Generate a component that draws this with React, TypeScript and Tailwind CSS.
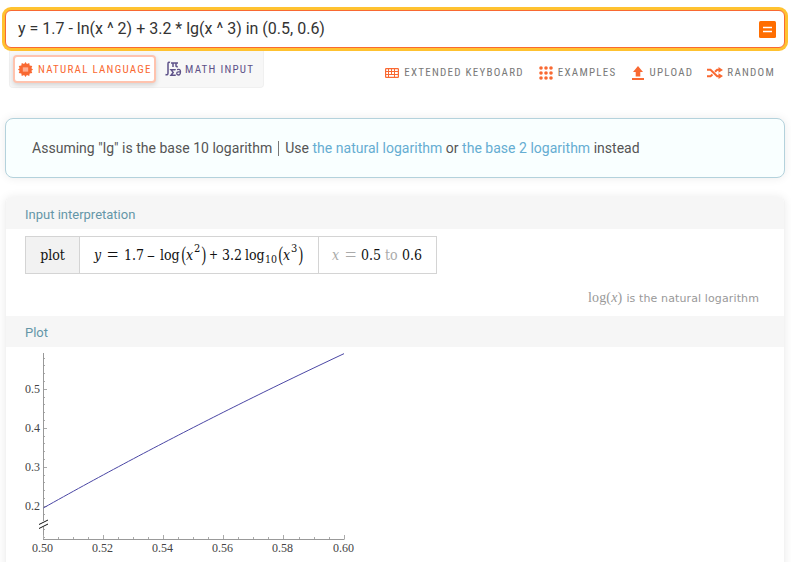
import type { ReactNode } from "react";

const serif = "font-['DejaVu_Serif_Condensed','DejaVu_Serif',serif]";

const px = (x: number) => 43.5 + (x - 0.5) * 3005;
const py = (y: number) => 389.5 - (y - 0.5) * 390;

const curve = Array.from({ length: 61 }, (_, i) => {
  const x = 0.5 + i / 600;
  return `${px(x).toFixed(2)},${py(1.7 - 2 * Math.log(x) + 9.6 * Math.log10(x)).toFixed(2)}`;
}).join(" ");

const xTicks = Array.from({ length: 21 }, (_, i) => i);
const yTicks = Array.from({ length: 24 }, (_, i) => i);

function Chart() {
  return (
    <svg width="360" height="215" viewBox="0 347 360 215" className="block">
      <g stroke="#999" strokeWidth="1">
        <path d="M43.5 353V521M43.5 527V540M43 539.5H344.5" fill="none" />
        {xTicks.map((i) => {
          const x = Math.round(43 + i * 15.03) + 0.5;
          return <path key={i} d={`M${x} ${i % 4 ? 537 : 535}V539`} stroke="#aaa" />;
        })}
        {yTicks.map((i) => {
          const y = Math.floor(358 + i * 7.8) + 0.5;
          if (i === 21) return null;
          return <path key={i} d={`M44 ${y}H${i % 5 === 4 ? 47 : 45}`} stroke="#aaa" />;
        })}
      </g>
      <path d="M39 524.5L48 520M39 528.5L48 524" stroke="#111" strokeWidth="1" />
      <polyline points={curve} fill="none" stroke="#4a46a4" strokeWidth="1" />
      <g className="font-['Liberation_Serif',serif] text-[12px]" fill="#444">
        {[0.5, 0.4, 0.3, 0.2].map((v) => (
          <text key={v} x="40" y={py(v) + 3.5} textAnchor="end">{v.toFixed(1)}</text>
        ))}
        {[0.5, 0.52, 0.54, 0.56, 0.58, 0.6].map((v) => (
          <text key={v} x={v === 0.6 ? 343.5 : 42.5 + (v - 0.5) * 3000} y="552" textAnchor="middle">{v.toFixed(2)}</text>
        ))}
      </g>
    </svg>
  );
}

const toolText = "whitespace-nowrap font-['Roboto_Condensed',Roboto,sans-serif] text-[11px] leading-4 tracking-[1.25px] [font-stretch:75%]";

function Tool({ children, label, className }: { children: ReactNode; label: string; className: string }) {
  return (
    <div className={`flex items-center ${className}`}>
      {children}
      <span className={toolText}>{label}</span>
    </div>
  );
}

function PodHeader({ children, className = "" }: { children: ReactNode; className?: string }) {
  return <h2 className={`bg-[#f6f6f6] pl-5 text-[13px] text-[#6596a8] ${className}`}>{children}</h2>;
}

function Paren({ children }: { children: string }) {
  return <span className="inline-block w-[5px] origin-center scale-x-[0.85] scale-y-[1.25] text-center font-['Liberation_Serif',serif] text-[16px]">{children}</span>;
}

function Equals({ className }: { className: string }) {
  return <span className={`origin-left scale-x-[1.12] font-['Liberation_Serif',serif] text-[18px] leading-none ${className}`}>=</span>;
}

export default function App() {
  return (
    <div className="flex h-[562px] w-[791px] flex-col overflow-hidden bg-white pl-[5px] pr-[6px] pt-[10px] font-[Roboto,sans-serif]">
      <div className="relative flex h-[38px] shrink-0 items-center justify-between rounded-[6px] border border-[#f96932] bg-white pl-3 pr-[8px] shadow-[0_0_0_3px_#ffc230]">
        <span className="text-[16px] text-[#333]">y = 1.7 - ln(x ^ 2) + 3.2 * lg(x ^ 3) in (0.5, 0.6)</span>
        <svg width="17" height="17" viewBox="0 0 17 17">
          <rect width="17" height="17" rx="1.5" fill="#ff6d00" />
          <path d="M4 6.5H13M4 10.5H13" stroke="#fff" strokeWidth="1.5" />
        </svg>
      </div>

      <div className="flex h-[70px] shrink-0 justify-between">
        <div className="ml-1 flex h-[40px] w-[255px] items-center rounded-b-[4px] border border-t-0 border-[#f0f0f0] bg-[#f7f7f7] pl-[3px] pt-[3px]">
          <div className="flex h-[28px] w-[143px] shrink-0 items-center rounded-[4px] border-2 border-[#ffc3ae] bg-white pl-[3px] text-[#f96932] shadow-[0_2px_5px_rgba(0,0,0,0.15)]">
            <svg className="shrink-0" width="15" height="15" viewBox="-7 -7 14 14">
              <path d="M0 -7L1.3 -5.1L3.5 -6.1L3.9 -3.8L6.3 -3.3L5.5 -1.2L7 0L5.5 1.2L6.3 3.3L3.9 3.8L3.5 6.1L1.3 5.1L0 7L-1.3 5.1L-3.5 6.1L-3.9 3.8L-6.3 3.3L-5.5 1.2L-7 0L-5.5 -1.2L-6.3 -3.3L-3.9 -3.8L-3.5 -6.1L-1.3 -5.1Z" fill="currentColor" />
              <rect x="-2.5" y="-2" width="5" height="4" fill="#ffad90" />
            </svg>
            <span className={`ml-[5px] pt-[2px] ${toolText}`}>NATURAL LANGUAGE</span>
          </div>
          <div className="ml-[9px] flex items-center text-[#5e5289]">
            <svg className="shrink-0" width="17" height="16" viewBox="0 0 17 16" fill="none" stroke="currentColor" strokeWidth="1.5">
              <path d="M5 1.5Q3 .5 3 3V12Q3 14.5 .5 13.5" />
              <path d="M6 2H13M8 2V6M11 2V5Q11 6 12.8 5.5" />
              <path d="M10 9.3V8.7H6L8.2 11.4L6 14.3H10V13.5" />
              <path d="M12 8.7Q15.5 7.5 15.5 10.5Q15.5 14 13.4 14Q11.7 14 11.7 12.3Q11.7 10.9 13.4 10.9H15.4" strokeWidth="1.3" />
            </svg>
            <span className={`ml-[3px] pt-[2px] ${toolText}`}>MATH INPUT</span>
          </div>
        </div>

        <div className="mt-[17px] flex h-4 items-center pr-[10px] text-[#797979]">
          <Tool label="EXTENDED KEYBOARD" className="gap-[5px]">
            <svg width="14" height="10" viewBox="0 0 14 10" fill="none" stroke="#f96932">
              <rect x=".6" y=".6" width="12.8" height="8.8" rx=".6" strokeWidth="1.2" />
              <path d="M0 3.5H14M0 6.5H14M3.5 0V10M6.5 0V6.5M9.5 0V10" />
            </svg>
          </Tool>
          <Tool label="EXAMPLES" className="ml-[15px] gap-[5px]">
            <svg width="14" height="14" viewBox="0 0 14 14" fill="#f96932">
              {[2, 7, 12].map((y) => [2, 7, 12].map((x) => <circle key={`${x}-${y}`} cx={x} cy={y} r="1.8" />))}
            </svg>
          </Tool>
          <Tool label="UPLOAD" className="ml-[15px] gap-[6px]">
            <svg width="12" height="14" viewBox="0 0 12 14" fill="#f96932">
              <path d="M6 0L11 6H8.3V10.5H3.7V6H1ZM0 12H12V14H0Z" />
            </svg>
          </Tool>
          <Tool label="RANDOM" className="ml-[14px] gap-[4px]">
            <svg width="16" height="12" viewBox="0 0 16 12">
              <path d="M0 2.7H3.5L10.2 9.3H12M0 9.3H3.5L5.5 7.5M8 4.8L10.2 2.7H12" fill="none" stroke="#f96932" strokeWidth="2" />
              <path d="M11.5 0L16 2.9L11.5 5.8ZM11.5 6.2L16 9.1L11.5 12Z" fill="#f96932" />
            </svg>
          </Tool>
        </div>
      </div>

      <div className="flex h-[60px] shrink-0 items-center whitespace-pre rounded-[8px] border border-[#b4d2dc] bg-[#f9ffff] pl-[26px] text-[14px] text-[#555] shadow-[0_0_10px_rgba(0,0,0,0.08)]">
        <span className="tracking-[0.02px]">Assuming "lg" is the base 10 logarithm </span>
        <span className="ml-[2px] mr-[3px] h-[15px] w-px bg-[#777]" />
        <span className="tracking-[0.02px]"> Use <a className="text-[#65add2]">the natural logarithm</a> or <a className="text-[#65add2]">the base 2 logarithm</a> instead</span>
      </div>

      <section className="mt-[19px] h-[380px] shrink-0 overflow-hidden rounded-t-[6px] border-x border-[#f3f3f3] bg-white shadow-[0_0_10px_rgba(0,0,0,0.08)]">
        <PodHeader className="h-[32px] pl-[19px] leading-[35px]">Input interpretation</PodHeader>
        <div className="h-[87px] pl-[19px] pt-[7px]">
          <div className={`flex h-[38px] w-[412px] border border-[#d4d4d4] text-[14px] text-[#111] ${serif}`}>
            <div className="flex w-[54px] items-center justify-center border-r border-[#d4d4d4] bg-[#f2f2f2]">plot</div>
            <div className="flex w-[239px] items-center whitespace-pre border-r border-[#d4d4d4] pl-[14px]">
              <i className="w-[13px]">y</i>
              <Equals className="w-[17px]" />
              <span className="w-[23px]">1.7</span>
              <span className="w-[13px] origin-left scale-x-125">–</span>
              <span className="w-[21px]">log</span>
              <Paren>(</Paren>
              <i className="w-[8px]">x</i>
              <span className="-mt-[11px] w-[7px] text-[11px]">2</span>
              <Paren>)</Paren>
              <span className="ml-[3px] w-[13px] text-[12px]">+</span>
              <span className="w-[23px]">3.2</span>
              <span className="w-[20px]">log</span>
              <span className="mt-[9px] w-[13px] text-[10.5px]">10</span>
              <Paren>(</Paren>
              <i className="w-[8px]">x</i>
              <span className="-mt-[11px] w-[7px] text-[11px]">3</span>
              <Paren>)</Paren>
            </div>
            <div className="flex items-center pl-[13px] text-[#aaa]">
              <i className="w-[13px]">x</i>
              <Equals className="w-[16px]" />
              <span className="w-[24px] text-[#111]">0.5</span>
              <span className="w-[17px]">to</span>
              <span className="text-[#111]">0.6</span>
            </div>
          </div>
          <div className="mt-[16px] flex h-4 items-baseline justify-end pr-[25px] text-[11px] leading-4 text-[#999]">
            <span className="mr-[4px] font-['Liberation_Serif',serif] text-[14px] tracking-[0.15px]">log(<i>x</i>)</span>
            <span className="font-['DejaVu_Sans',sans-serif] tracking-[0.12px]">is the natural logarithm</span>
          </div>
        </div>
        <PodHeader className="h-[31px] pl-[19px] leading-[33px]">Plot</PodHeader>
        <div className="-ml-[6px]"><Chart /></div>
      </section>
    </div>
  );
}
